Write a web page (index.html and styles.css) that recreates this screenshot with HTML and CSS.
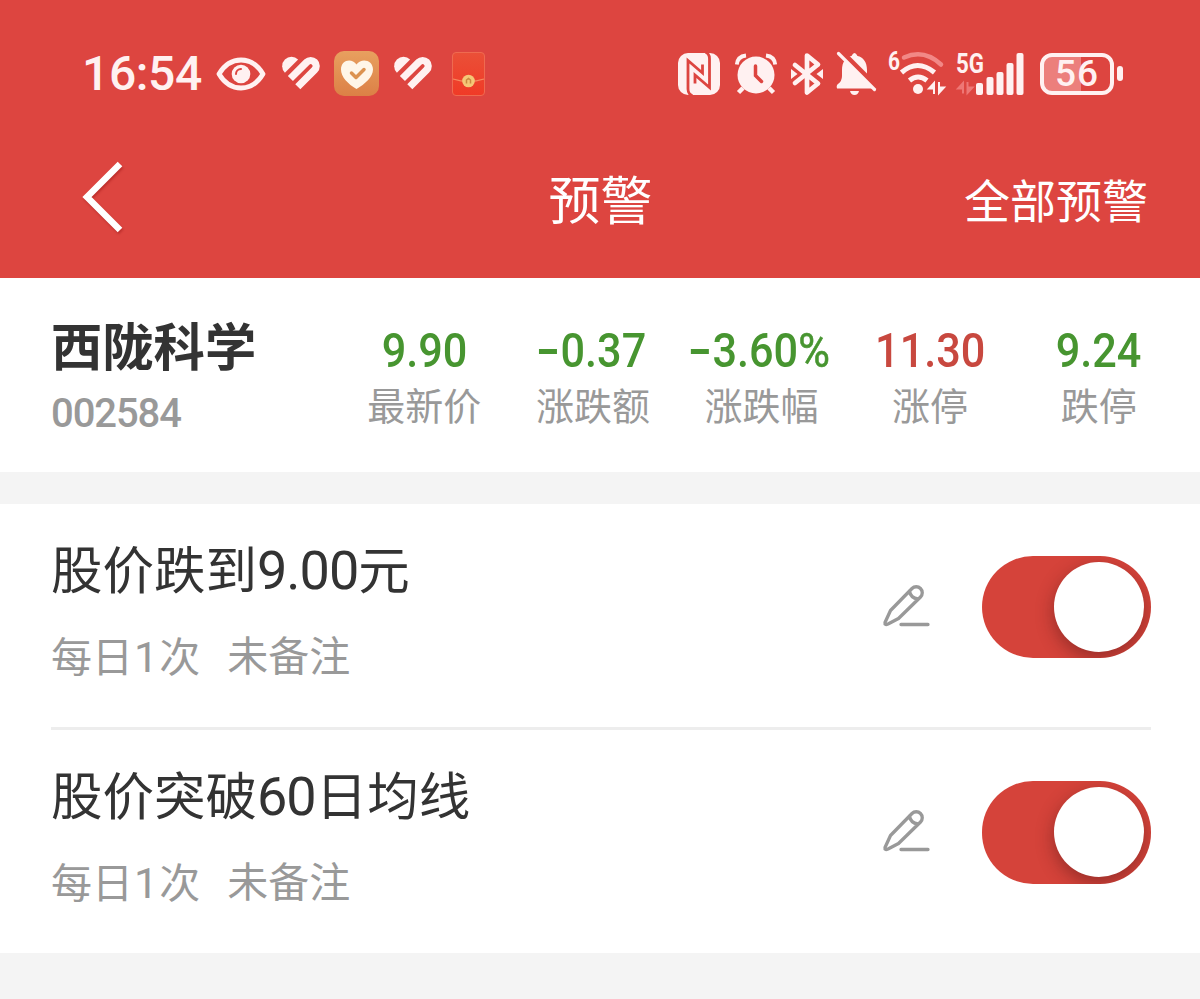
FILE: index.html
```html
<!DOCTYPE html>
<html lang="zh-CN">
<head>
<meta charset="UTF-8">
<meta name="viewport" content="width=device-width, initial-scale=1.0">
<title>预警</title>
<link rel="stylesheet" href="styles.css">
</head>
<body>
<header class="header">
  <div class="status">
    <div class="status-left">
      <span class="time">16:54</span>
      <svg class="eye" width="50" height="34" viewBox="0 0 50 34">
        <path d="M3 17C9 7 17 3 25 3s16 4 22 14C41 27 33 31 25 31S9 27 3 17z" fill="none" stroke="#fff1f1" stroke-width="4.8" stroke-linejoin="round"/>
        <circle cx="25" cy="17" r="9.3" fill="#fff1f1"/>
        <path d="M20 17a5 5 0 0 1 5-5" fill="none" stroke="#dd4540" stroke-width="2" stroke-linecap="round"/>
      </svg>
      <svg class="heart" width="38" height="35" viewBox="0 0 38 35">
        <path d="M2.9 16.8A9.3 9.3 0 0 1 16.1 3.6z" fill="#fff1f1"/>
        <path d="M8.4 22.5L24.8 6.1a5.5 5.5 0 0 1 7.8 7.8L15.8 30.7" fill="none" stroke="#fff1f1" stroke-width="7.2"/>
      </svg>
      <svg class="app" width="45" height="45" viewBox="0 0 45 45">
        <defs>
          <linearGradient id="gold" x1="0" y1="0" x2="0" y2="1"><stop offset="0" stop-color="#e8a05f"/><stop offset="1" stop-color="#dc8046"/></linearGradient>
        </defs>
        <rect width="45" height="45" rx="10" fill="url(#gold)"/>
        <path d="M22.500 38C14 33 7 26 7 18.500C7 9 17.500 6.500 22.500 13.500C27.500 6.500 39 9 39 18.500C39 26 31 33 22.500 38z" fill="#fff6e8"/>
        <path d="M17.500 22l4.500 4.500 8-8" fill="none" stroke="#dc9350" stroke-width="3.500" stroke-linecap="round" stroke-linejoin="round"/>
      </svg>
      <svg class="heart" width="38" height="35" viewBox="0 0 38 35">
        <path d="M2.9 16.8A9.3 9.3 0 0 1 16.1 3.6z" fill="#fff1f1"/>
        <path d="M8.4 22.5L24.8 6.1a5.5 5.5 0 0 1 7.8 7.8L15.8 30.7" fill="none" stroke="#fff1f1" stroke-width="7.2"/>
      </svg>
      <svg class="packet" width="33" height="44" viewBox="0 0 33 44">
        <defs>
          <linearGradient id="red" x1="0" y1="0" x2="0" y2="1"><stop offset="0" stop-color="#ea5038"/><stop offset="1" stop-color="#f03a26"/></linearGradient>
        </defs>
        <rect x=".5" y=".5" width="32" height="43" rx="3.500" fill="url(#red)" stroke="#ef6a50"/>
        <path d="M1 27q15.500 5 31 0" fill="none" stroke="#f58a60" stroke-width="1.300"/>
        <circle cx="16.500" cy="29" r="6.300" fill="#f4c777"/>
        <path d="M14.500 31.500v-3.500l2-1.500 2 1.500v3.500" fill="none" stroke="#c98b42" stroke-width="1.500"/>
      </svg>
    </div>
    <div class="status-right">
      <svg class="nfc" width="42" height="42" viewBox="0 0 42 42">
        <rect width="42" height="42" rx="10" fill="#fff1f1"/>
        <path d="M14.500 42.500Q10 41.500 10 36V7.500L24.500 20V11.500M27.500 -.5Q31.500 .5 31.500 6V34.500L17 22V30.500" fill="none" stroke="#dd4540" stroke-width="2.800"/>
      </svg>
      <svg class="alarm" width="42" height="42" viewBox="0 0 42 42">
        <path d="M8 35l-4.500 4.500M34 35l4.500 4.500" stroke="#fff1f1" stroke-width="4.500"/>
        <circle cx="21" cy="22" r="18.500" fill="#fff1f1"/>
        <path d="M1.800 11.500Q2.500 3.500 11 2.500M40.200 11.500Q39.500 3.500 31 2.500" fill="none" stroke="#fff1f1" stroke-width="3.800"/>
        <path d="M20.500 13v9.500l6 6" fill="none" stroke="#dd4540" stroke-width="3.500" stroke-linecap="round"/>
      </svg>
      <svg class="bt" width="32" height="42" viewBox="0 0 32 42">
        <path d="M4 12L27 30.500l-11 9V2.500l11 9L4 30" fill="none" stroke="#fff1f1" stroke-width="4.700" stroke-linejoin="round" stroke-linecap="round"/>
        <path d="M0 16l6.500 5L0 26zM32 16l-6.500 5 6.500 5z" fill="#fff1f1"/>
      </svg>
      <svg class="bell" width="40" height="44" viewBox="0 0 40 44">
        <path d="M1 36.500q-1-3 1-4.500 4-3 4-8v-6C6 10 10 5 15.500 4q3-6 6 0C27 5 31 10 31 18v6q0 5 4 8 3 2.500 1 4.500z" fill="#fff1f1"/>
        <path d="M14 39h9q-1 4-4.500 4T14 39z" fill="#fff1f1"/>
        <path d="M5 -1L44 38" stroke="#dd4540" stroke-width="5"/>
        <path d="M2.500 1.500l36 36" stroke="#fff1f1" stroke-width="3.200" stroke-linecap="round"/>
      </svg>
      <svg class="wifi" width="58" height="46" viewBox="0 0 58 46">
        <text x="0" y="19" font-size="25" font-weight="700" textLength="12" lengthAdjust="spacingAndGlyphs" fill="#fff1f1">6</text>
        <path d="M16 6.500q20-9 37 7" fill="none" stroke="#f28886" stroke-width="4.500" stroke-linecap="round"/>
        <path d="M13.500 21.500q16-14 33 0M21.500 29.500q8.500-7 17.500 0" fill="none" stroke="#fff1f1" stroke-width="5"/>
        <circle cx="30" cy="38" r="5" fill="#fff1f1"/>
        <path d="M46 43V32l-5 5.500h5M51 31v11l5-5.500h-5" fill="#fff1f1" stroke="#fff1f1" stroke-width="2"/>
      </svg>
      <svg class="signal" width="68" height="46" viewBox="0 0 68 46">
        <text x="0" y="22" font-size="27" font-weight="700" textLength="28" lengthAdjust="spacingAndGlyphs" fill="#fff1f1">5G</text>
        <path d="M7 42.500V32l-5 5.500h5M11.500 31v11l5-5.500h-5" fill="#ee7775" stroke="#ee7775" stroke-width="2"/>
        <g fill="#fff1f1">
          <rect x="20" y="32" width="7" height="12" rx="2"/>
          <rect x="30.500" y="26" width="7" height="18" rx="2"/>
          <rect x="40.500" y="21" width="7" height="23" rx="2"/>
          <rect x="50.500" y="12" width="7" height="32" rx="2"/>
          <rect x="60.500" y="2" width="7" height="42" rx="2"/>
        </g>
      </svg>
      <div class="battery"><span>56</span></div>
      <i class="battery-tip"></i>
    </div>
  </div>
  <nav class="nav">
    <svg class="back" width="46" height="76" viewBox="0 0 46 76">
      <path d="M39 4L6 37l33 33" fill="none" stroke="#fff" stroke-width="6.500"/>
    </svg>
    <h1>预警</h1>
    <a class="all">全部预警</a>
  </nav>
</header>

<section class="stock">
  <div class="name">
    <h2>西陇科学</h2>
    <p>002584</p>
  </div>
  <div class="quotes">
    <div class="quote down"><b>9.90</b><span>最新价</span></div>
    <div class="quote down"><b><i class="minus"></i>0.37</b><span>涨跌额</span></div>
    <div class="quote down"><b><i class="minus"></i>3.60<em>%</em></b><span>涨跌幅</span></div>
    <div class="quote up"><b>11.30</b><span>涨停</span></div>
    <div class="quote down"><b>9.24</b><span>跌停</span></div>
  </div>
</section>

<main class="alerts">
  <div class="alert">
    <div class="info">
      <h3>股价跌到<span class="num">9.00</span>元</h3>
      <p><span>每日<span class="num">1</span>次</span><span>未备注</span></p>
    </div>
    <svg class="edit" width="48" height="44" viewBox="0 0 48 44">
      <path d="M2 38.500L7.500 26.500 29 4.500a6 6 0 0 1 8.500 8.500L15.500 34.500 5 40Q1.500 41.500 2 38.500zM26.500 7q1 7 8.500 8M18 40.500h27" fill="none" stroke="#999" stroke-width="3.300" stroke-linecap="round" stroke-linejoin="round"/>
    </svg>
    <div class="toggle"><div class="knob"></div></div>
  </div>
  <div class="alert">
    <div class="info">
      <h3>股价突破<span class="num">60</span>日均线</h3>
      <p><span>每日<span class="num">1</span>次</span><span>未备注</span></p>
    </div>
    <svg class="edit" width="48" height="44" viewBox="0 0 48 44">
      <path d="M2 38.500L7.500 26.500 29 4.500a6 6 0 0 1 8.500 8.500L15.500 34.500 5 40Q1.500 41.500 2 38.500zM26.500 7q1 7 8.500 8M18 40.500h27" fill="none" stroke="#999" stroke-width="3.300" stroke-linecap="round" stroke-linejoin="round"/>
    </svg>
    <div class="toggle"><div class="knob"></div></div>
  </div>
</main>
</body>
</html>
```
FILE: styles.css
```css
* {
  box-sizing: border-box;
  margin: 0;
  padding: 0;
}

body {
  background: #f4f4f4;
  font-family: Roboto, "Noto Sans CJK SC", sans-serif;
  color: #333;
  height: 999px;
  overflow: hidden;
}

svg {
  display: block;
  flex: none;
  overflow: visible;
}

h1, h2, h3 {
  font-weight: 400;
  white-space: nowrap;
}

.header {
  height: 278px;
  background: #dd4540;
  color: #fff;
}

/* status bar */
.status {
  height: 147px;
  padding: 0 77px 0 82px;
  display: flex;
  justify-content: space-between;
  align-items: center;
  color: #fff1f1;
}

.status-left,
.status-right {
  display: flex;
  align-items: center;
}

.time {
  width: 134px;
  font-size: 48px;
  font-weight: 500;
  line-height: 50px;
  letter-spacing: -.4px;
}

.heart {
  margin-left: 16px;
}

.app {
  margin-left: 14px;
}

.app + .heart {
  margin-left: 15px;
}

.packet {
  margin-left: 20px;
}

.nfc {
  overflow: hidden;
}

.alarm {
  margin-left: 15px;
}

.bt {
  margin-left: 14px;
}

.bell {
  margin-left: 13px;
}

.wifi {
  margin-left: 12px;
}

.signal {
  margin-left: 10px;
}

.battery {
  width: 74px;
  height: 42px;
  margin-left: 16px;
  border: 4px solid #fff1f1;
  border-radius: 12px;
  background: linear-gradient(to right, #ec7f7c 56%, transparent 56%);
  display: flex;
  align-items: center;
  justify-content: center;
  font-size: 37px;
  font-weight: 500;
  letter-spacing: 1px;
  line-height: 34px;
}

.battery-tip {
  width: 6px;
  height: 15px;
  margin-left: 3px;
  border-radius: 3px;
  background: #fff1f1;
}

/* nav */
.nav {
  height: 97px;
  padding: 0 52px 0 81px;
  display: grid;
  grid-template-columns: 1fr auto 1fr;
  align-items: center;
}

.nav h1 {
  margin: 3px 28px 0 0;
  font-size: 52px;
}

.back {
  margin-top: 4px;
  filter: drop-shadow(1px 2px 1px rgba(120, 0, 0, .3));
}

.all {
  justify-self: end;
  font-size: 46px;
  line-height: 60px;
  margin-top: 12px;
}

/* stock */
.stock {
  height: 194px;
  display: flex;
  background: #fff;
}

.name {
  width: 340px;
  padding: 33px 0 0 51px;
}

.name h2 {
  font-size: 51.3px;
  font-weight: 700;
  line-height: 76px;
}

.name p {
  margin-top: 2px;
  font-size: 40px;
  font-weight: 500;
  line-height: 50px;
  letter-spacing: -1.1px;
  color: #999;
}

.quotes {
  width: 843px;
  padding-top: 47px;
  display: grid;
  grid-template-columns: repeat(5, 1fr);
}

.quote {
  display: flex;
  flex-direction: column;
  align-items: center;
}

/* digits are narrower than the stock Roboto ones */
.quote b {
  display: flex;
  align-items: center;
  font-size: 48px;
  font-weight: 500;
  line-height: 52px;
  transform: scaleX(.9);
}

.quote em {
  display: inline-block;
  width: 38px;
  font-style: normal;
  font-weight: 400;
  -webkit-text-stroke: .6px currentColor;
}

.minus {
  width: 20px;
  height: 5px;
  margin-right: 4px;
  background: currentColor;
}

.quote span {
  margin-top: 2px;
  font-size: 38px;
  line-height: 56px;
  color: #999;
}

.down b {
  color: #479530;
}

.up b {
  color: #c8483f;
}

/* alerts */
.alerts {
  margin-top: 32px;
  padding: 0 49px 0 51px;
  background: #fff;
}

.alert {
  height: 223px;
  display: flex;
  align-items: flex-start;
}

.alert + .alert {
  height: 226px;
  border-top: 3px solid #ededed;
}

.info {
  flex: 1;
  padding-top: 29px;
}

.info h3 {
  font-size: 51.5px;
  line-height: 76px;
}

.info h3 .num {
  font-size: 54px;
  letter-spacing: -1px;
}

.info p {
  margin-top: 17px;
  display: flex;
  gap: 27px;
  font-size: 41px;
  line-height: 60px;
  color: #999;
}

.info p .num {
  margin: 0 1px;
  font-size: 43px;
}

.edit {
  margin: 80px 51px 0 0;
}

.toggle {
  width: 169px;
  height: 102px;
  margin-top: 52px;
  padding: 6px 7px;
  border-radius: 51px;
  background: #d5433a;
  overflow: hidden;
  display: flex;
  justify-content: flex-end;
}

.alert + .alert .edit {
  margin-top: 79px;
}

.alert + .alert .toggle {
  margin-top: 51px;
  height: 103px;
}

.knob {
  width: 90px;
  height: 90px;
  border-radius: 50%;
  background: #fff;
  box-shadow: 0 6px 18px rgba(70, 20, 20, .45);
}
```
